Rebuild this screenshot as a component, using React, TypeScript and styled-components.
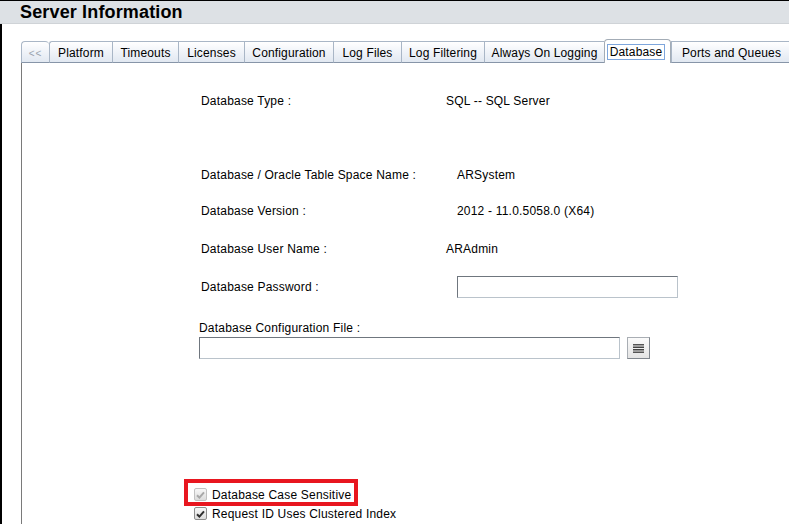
import React from 'react';
import styled, { createGlobalStyle, css } from 'styled-components';

const Global = createGlobalStyle`
  html, body { margin: 0; padding: 0; background: #fff; }
  body { font-family: "Liberation Sans", Arial, sans-serif; font-size: 12px; color: #000; }
  #root { width: 789px; height: 524px; overflow: hidden; }
`;

const Page = styled.div`
  width: 789px;
  height: 524px;
  display: flex;
  flex-direction: column;
  overflow: hidden;
`;

const Header = styled.header`
  height: 22px;
  flex-shrink: 0;
  border-top: 1px solid #000;
  border-bottom: 1px solid #cfd3d7;
  background: #dde1e5;
  padding-left: 20px;
  display: flex;
  align-items: center;
`;

const Title = styled.h1`
  margin: 0;
  font-size: 18px;
  line-height: 22px;
  font-weight: bold;
  letter-spacing: 0.15px;
  color: #000;
`;

const Body = styled.div`
  flex: 1;
  min-height: 0;
  border-left: 2px solid #000;
  padding: 15px 0 0 19px;
  display: flex;
  flex-direction: column;
`;

const TabStrip = styled.div`
  height: 24px;
  display: flex;
  align-items: flex-end;
  flex-shrink: 0;
  white-space: nowrap;
`;

const Tab = styled.div<{ $w: number; $active?: boolean; $round?: string; $dim?: boolean }>`
  box-sizing: border-box;
  width: ${(p) => p.$w}px;
  flex-shrink: 0;
  height: 22px;
  display: flex;
  align-items: center;
  justify-content: center;
  border: 1px solid #a9b6c6;
  border-right: none;
  border-bottom: 1px solid #8795a8;
  background: linear-gradient(#ffffff, #f1f4f9 45%, #e1e8f1);
  color: ${(p) => (p.$dim ? '#9aa3ad' : '#000')};
  font-size: ${(p) => (p.$dim ? '10px' : '12px')};
  letter-spacing: ${(p) => (p.$dim ? '1px' : '0.15px')};
  padding-top: 2px;
  border-radius: ${(p) => p.$round ?? '0'};
  ${(p) =>
    p.$active &&
    css`
      height: 24px;
      background: #fff;
      border: 1px solid #a3acb6;
      border-bottom: none;
      border-radius: 4px 4px 0 0;
      align-items: flex-start;
      padding-top: 4px;
    `}
`;

const Focus = styled.span`
  border: 1px solid #7ea6dc;
  padding: 0 2px;
  line-height: 14px;
  margin-left: -3px;
`;

const Panel = styled.div`
  flex: 1;
  border-left: 1px solid #7a7a7a;
  padding-left: 177px;
  display: flex;
  flex-direction: column;
  letter-spacing: 0.2px;
`;

const Row = styled.div<{ $mt: number }>`
  display: flex;
  align-items: center;
  height: 22px;
  margin-top: ${(p) => p.$mt}px;
  white-space: nowrap;
`;

const Label = styled.span<{ $w: number }>`
  box-sizing: border-box;
  width: ${(p) => p.$w}px;
  flex-shrink: 0;
  padding-left: 2px;
`;

const Value = styled.span``;

const TextInput = styled.div<{ $w: number }>`
  box-sizing: border-box;
  width: ${(p) => p.$w}px;
  height: 22px;
  border: 1px solid;
  border-color: #6f767e #bac3cb #bac3cb #6f767e;
  background: #fff;
`;

const StackLabel = styled.div`
  margin-top: 23px;
  line-height: 14px;
  white-space: nowrap;
`;

const FileRow = styled.div`
  display: flex;
  gap: 7px;
  margin-top: 2px;
`;

const IconButton = styled.div`
  box-sizing: border-box;
  width: 23px;
  height: 22px;
  border: 1px solid;
  border-color: #a9aeb4 #80868d #80868d #a9aeb4;
  background: linear-gradient(#fbfbfb, #e4e4e4);
  display: flex;
  align-items: center;
  justify-content: center;
`;

const Checks = styled.div`
  margin-top: 126px;
  margin-left: -5px;
  display: flex;
  flex-direction: column;
`;

const CheckRow = styled.div<{ $highlight?: boolean }>`
  position: relative;
  height: 19px;
  display: flex;
  align-items: center;
  gap: 5px;
  white-space: nowrap;
  ${(p) =>
    p.$highlight &&
    css`
      &::after {
        content: '';
        position: absolute;
        left: -10px;
        top: -6px;
        width: 174px;
        height: 27px;
        box-sizing: border-box;
        border: 4px solid #e8161f;
        pointer-events: none;
      }
    `}
`;

const Box = styled.span<{ $disabled?: boolean }>`
  box-sizing: border-box;
  width: 13px;
  height: 13px;
  border: 1px solid ${(p) => (p.$disabled ? '#c2c2c2' : '#8e8e8e')};
  border-radius: 2px;
  background: linear-gradient(#f7f7f7, #dcdcdc);
  display: flex;
  align-items: center;
  justify-content: center;
`;

const Check: React.FC<{ disabled?: boolean }> = ({ disabled }) => (
  <Box $disabled={disabled}>
    <svg width="9" height="8" viewBox="0 0 9 8">
      <path
        d="M1 4.2 L3.4 6.6 L8 1.4"
        fill="none"
        stroke={disabled ? '#a8a8a8' : '#2e2e2e'}
        strokeWidth="2"
      />
    </svg>
  </Box>
);

const tabs: { label: string; w: number; round?: string; dim?: boolean; active?: boolean }[] = [
  { label: '<<', w: 28, round: '4px 4px 0 0', dim: true },
  { label: 'Platform', w: 63, round: '3px 0 0 0' },
  { label: 'Timeouts', w: 66 },
  { label: 'Licenses', w: 66 },
  { label: 'Configuration', w: 89 },
  { label: 'Log Files', w: 68 },
  { label: 'Log Filtering', w: 83 },
  { label: 'Always On Logging', w: 120 },
  { label: 'Database', w: 67, active: true },
  { label: 'Ports and Queues', w: 120 },
];

export default function App() {
  return (
    <Page>
      <Global />
      <Header>
        <Title>Server Information</Title>
      </Header>
      <Body>
        <TabStrip>
          {tabs.map((t) => (
            <Tab key={t.label} $w={t.w} $round={t.round} $dim={t.dim} $active={t.active}>
              {t.active ? <Focus>{t.label}</Focus> : t.label}
            </Tab>
          ))}
        </TabStrip>
        <Panel>
          <Row $mt={27}>
            <Label $w={247}>Database Type :</Label>
            <Value>SQL -- SQL Server</Value>
          </Row>
          <Row $mt={52}>
            <Label $w={258}>Database / Oracle Table Space Name :</Label>
            <Value>ARSystem</Value>
          </Row>
          <Row $mt={14}>
            <Label $w={258}>Database Version :</Label>
            <Value>2012 - 11.0.5058.0 (X64)</Value>
          </Row>
          <Row $mt={16}>
            <Label $w={247}>Database User Name :</Label>
            <Value>ARAdmin</Value>
          </Row>
          <Row $mt={16}>
            <Label $w={258}>Database Password :</Label>
            <TextInput $w={221} />
          </Row>
          <StackLabel>Database Configuration File :</StackLabel>
          <FileRow>
            <TextInput $w={421} />
            <IconButton>
              <svg width="11" height="9" viewBox="0 0 11 9">
                <rect x="0" y="0" width="11" height="1.5" fill="#555" />
                <rect x="0" y="2.5" width="11" height="1.5" fill="#444" />
                <rect x="0" y="5" width="11" height="1.5" fill="#444" />
                <rect x="0" y="7.5" width="11" height="1.5" fill="#555" />
              </svg>
            </IconButton>
          </FileRow>
          <Checks>
            <CheckRow $highlight>
              <Check disabled />
              <span>Database Case Sensitive</span>
            </CheckRow>
            <CheckRow>
              <Check />
              <span>Request ID Uses Clustered Index</span>
            </CheckRow>
          </Checks>
        </Panel>
      </Body>
    </Page>
  );
}
